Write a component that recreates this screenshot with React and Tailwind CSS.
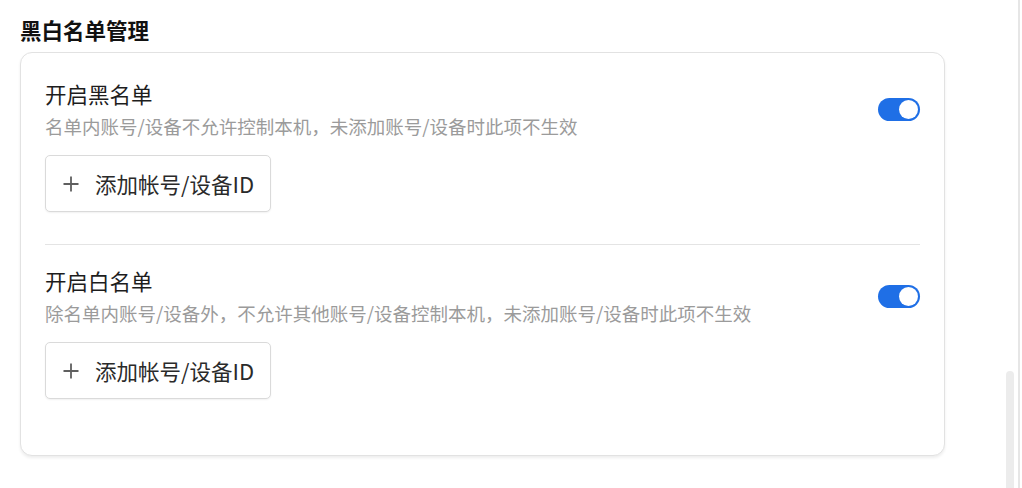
import React from "react";

function Toggle() {
  return (
    <div className="w-[42px] h-[23px] rounded-full bg-[#1f6fe6] flex items-center justify-end pr-[2px] shrink-0">
      <div className="w-[19px] h-[19px] rounded-full bg-white" />
    </div>
  );
}

function AddButton() {
  return (
    <button className="mt-[17px] h-[57px] w-[226px] rounded-[5px] border border-[#dadada] bg-white flex items-center pl-[17px] shadow-[0_1px_2px_rgba(0,0,0,0.06)]">
      <svg width="16" height="16" viewBox="0 0 16 16" className="shrink-0">
        <path d="M8 0.5v15M0.5 8h15" stroke="#5f5f5f" strokeWidth="1.8" fill="none" />
      </svg>
      <span className="ml-[16px] text-[21.5px] leading-[28px] text-[#2a2a2a]">
        添加帐号/设备<span className="text-[22px]">ID</span>
      </span>
    </button>
  );
}

function Section({ title, desc }) {
  return (
    <div>
      <div className="flex items-center justify-between">
        <div>
          <div className="text-[21.5px] leading-[28px] text-[#1d1d1d]">{title}</div>
          <div className="mt-[6px] text-[18.5px] leading-[24px] text-[#9b9b9b]">{desc}</div>
        </div>
        <Toggle />
      </div>
      <AddButton />
    </div>
  );
}

export default function App() {
  return (
    <div
      className="w-[1022px] h-[488px] bg-white flex overflow-hidden"
      style={{ fontFamily: '"Noto Sans CJK SC", "Noto Sans", sans-serif' }}
    >
      <div className="w-[1006px] shrink-0 pl-[20px] pt-[15px]">
        <div className="text-[21.5px] leading-[30px] font-bold text-[#111]">黑白名单管理</div>
        <div className="mt-[7px] w-[925px] h-[404px] rounded-[12px] border border-[#e2e2e2] bg-white shadow-[0_2px_3px_rgba(0,0,0,0.07)] px-[24px] pt-[27px]">
          <Section
            title="开启黑名单"
            desc="名单内账号/设备不允许控制本机，未添加账号/设备时此项不生效"
          />
          <div className="mt-[32px] h-px bg-[#e4e4e4]" />
          <div className="mt-[22px]">
            <Section
              title="开启白名单"
              desc="除名单内账号/设备外，不允许其他账号/设备控制本机，未添加账号/设备时此项不生效"
            />
          </div>
        </div>
      </div>
      <div className="w-[8px] shrink-0 flex flex-col">
        <div className="h-[371px]" />
        <div className="flex-1 rounded-t-[4px] bg-[#ececec]" />
      </div>
      <div className="w-[4px] shrink-0" />
      <div className="w-[2px] shrink-0 bg-[#e6e6e6]" />
      <div className="w-[2px] shrink-0" />
    </div>
  );
}
